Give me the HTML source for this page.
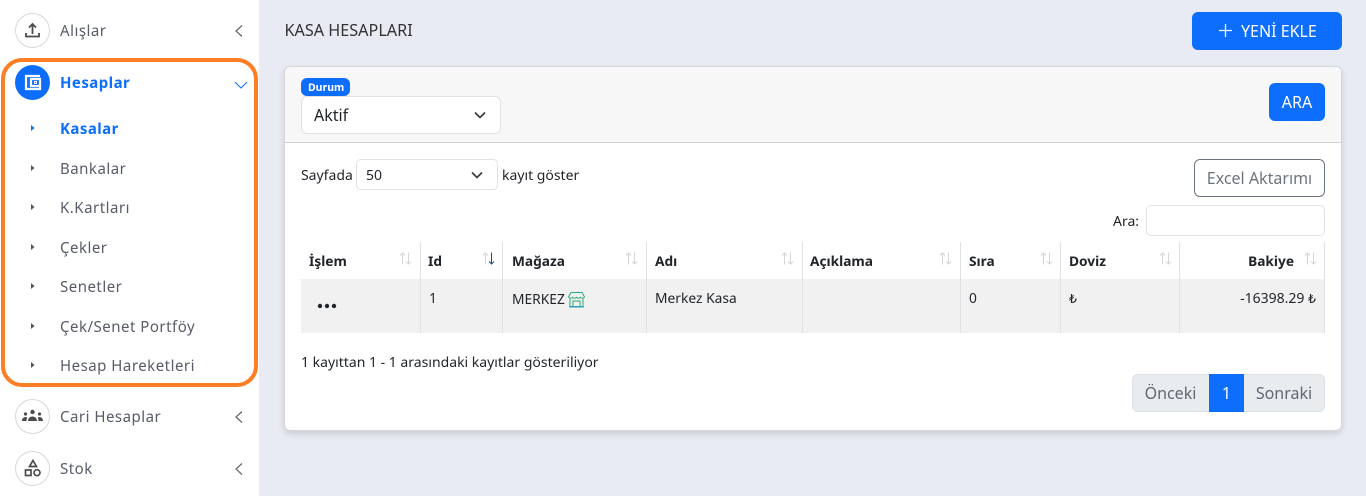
<!DOCTYPE html>
<html lang="tr"><head><meta charset="utf-8"><title>Kasa Hesapları</title>
<style>
html,body{margin:0;padding:0;width:1366px;height:496px;overflow:hidden;background:#e8ebf3}
body{position:relative;font-family:"Noto Sans","Noto Sans CJK JP","Liberation Sans",sans-serif;color:#212529;font-size:14px}
.a{position:absolute;white-space:nowrap;line-height:20px}
.box{position:absolute;box-sizing:border-box}
.m{color:#585c68;font-size:15px;letter-spacing:.5px;left:60px}
.mb{color:#0d6efd;font-weight:700;font-size:15px;letter-spacing:.45px;left:60px}
.th{font-weight:700;font-size:13.7px;color:#212529;top:252px}
.td{font-size:13.8px;color:#212529;top:289px}
.vl{position:absolute;top:242px;height:91px;width:1px;background:#dee2e6}
svg{position:absolute;display:block}
</style></head><body>
<div class="box" style="left:0;top:0;width:259px;height:496px;background:#fff"></div>
<div class="box" style="left:1px;top:58px;width:257px;height:329px;border:4px solid #fd7e24;border-radius:21px"></div>

<div class="box" style="left:15px;top:13px;width:35px;height:35px;border:1px solid #d8d8d8;border-radius:50%"></div>
<svg style="left:24px;top:22px" width="17" height="17" viewBox="0 0 17 17" fill="none" stroke="#4b4b4b" stroke-width="1.8"><path d="M8.5 12V2.500M5 5.500l3.500-3.500 3.500 3.500M2 11v3.500h13V11"/></svg>
<div class="a m" style="top:21px">Alışlar</div>
<svg style="left:234px;top:24px" width="10" height="14" viewBox="0 0 10 14" fill="none" stroke="#666" stroke-width="1.200"><path d="M8 1.500L2 7l6 5.500"/></svg>

<div class="box" style="left:15px;top:65px;width:35px;height:35px;background:#0d6efd;border-radius:50%"></div>
<svg style="left:24px;top:74px" width="18" height="17" viewBox="0 0 18 17" fill="none" stroke="#fff" stroke-width="2.200"><path d="M16 2H2v13h14V5H7v7h9"/><rect x="10.500" y="7.500" width="2" height="2" stroke-width="1"/></svg>
<div class="a mb" style="top:73px">Hesaplar</div>
<svg style="left:234px;top:80px" width="14" height="10" viewBox="0 0 14 10" fill="none" stroke="#0d6efd" stroke-width="1"><path d="M1 2l6 6 6-6"/></svg>

<div class="a mb" style="top:119px">Kasalar</div>
<div class="a m" style="top:159px">Bankalar</div>
<div class="a m" style="top:198px">K.Kartları</div>
<div class="a m" style="top:238px">Çekler</div>
<div class="a m" style="top:277px">Senetler</div>
<div class="a m" style="top:317px">Çek/Senet Portföy</div>
<div class="a m" style="top:356px">Hesap Hareketleri</div>
<svg style="left:31px;top:125px" width="4" height="6"><path d="M0 0l3.500 3L0 6z" fill="#0d6efd"/></svg>
<svg style="left:31px;top:165px" width="4" height="6"><path d="M0 0l3.500 3L0 6z" fill="#555"/></svg>
<svg style="left:31px;top:204px" width="4" height="6"><path d="M0 0l3.500 3L0 6z" fill="#555"/></svg>
<svg style="left:31px;top:244px" width="4" height="6"><path d="M0 0l3.500 3L0 6z" fill="#555"/></svg>
<svg style="left:31px;top:283px" width="4" height="6"><path d="M0 0l3.500 3L0 6z" fill="#555"/></svg>
<svg style="left:31px;top:323px" width="4" height="6"><path d="M0 0l3.500 3L0 6z" fill="#555"/></svg>
<svg style="left:31px;top:362px" width="4" height="6"><path d="M0 0l3.500 3L0 6z" fill="#555"/></svg>

<div class="box" style="left:15px;top:399px;width:35px;height:35px;border:1px solid #d8d8d8;border-radius:50%"></div>
<svg style="left:22px;top:409px" width="21" height="14" viewBox="0 0 21 14" fill="#4b4b4b"><circle cx="10.500" cy="3" r="2.200"/><circle cx="3.500" cy="5" r="1.600"/><circle cx="17.500" cy="5" r="1.600"/><path d="M6 12c0-6 9-6 9 0zM0 12c0-4 4-4.500 5-3.500L4.500 12zM21 12c0-4-4-4.500-5-3.500l.5 3.500z"/></svg>
<div class="a m" style="top:407px">Cari Hesaplar</div>
<svg style="left:234px;top:410px" width="10" height="14" viewBox="0 0 10 14" fill="none" stroke="#666" stroke-width="1.200"><path d="M8 1.500L2 7l6 5.500"/></svg>

<div class="box" style="left:15px;top:451px;width:35px;height:35px;border:1px solid #d8d8d8;border-radius:50%"></div>
<svg style="left:24px;top:459px" width="18" height="18" viewBox="0 0 18 18" fill="none" stroke="#4b4b4b" stroke-width="1.700"><path d="M9 1.500L12.500 7.500h-7z"/><rect x="1.500" y="11" width="5.500" height="5.500"/><circle cx="13" cy="13.700" r="3"/></svg>
<div class="a m" style="top:459px">Stok</div>
<svg style="left:234px;top:462px" width="10" height="14" viewBox="0 0 10 14" fill="none" stroke="#666" stroke-width="1.200"><path d="M8 1.500L2 7l6 5.500"/></svg>

<div class="a" style="left:284.500px;top:20px;font-size:16.200px;color:#333">KASA HESAPLARI</div>
<div class="box" style="left:1192px;top:12px;width:150px;height:38px;background:#0d6efd;border-radius:6px"></div>
<svg style="left:1219px;top:24px" width="13" height="13" viewBox="0 0 13 13" stroke="#fff" stroke-width="1.300"><path d="M6.500 0v13M0 6.500h13"/></svg>
<div class="a" style="left:1241px;top:21px;color:#fff;font-size:16px">YENİ EKLE</div>

<div class="box" style="left:284px;top:66px;width:1058px;height:365px;background:#fff;border:1px solid #d6d6d8;border-radius:6px;box-shadow:0 3px 7px rgba(0,0,0,.13)"></div>
<div class="box" style="left:285px;top:67px;width:1056px;height:76px;background:#f7f7f7;border-bottom:1px solid #d2d2d2;border-radius:5px 5px 0 0"></div>

<div class="box" style="left:301px;top:96px;width:200px;height:38px;background:#fff;border:1px solid #dee2e6;border-radius:6px"></div>
<div class="box" style="left:301px;top:78px;width:49px;height:18px;background:#0d6efd;border-radius:6px"></div>
<div class="a" style="left:308px;top:79px;height:18px;line-height:18px;color:#fff;font-size:10.500px;font-weight:700">Durum</div>
<div class="a" style="left:314px;top:105px;font-size:16px;color:#212529">Aktif</div>
<svg style="left:474px;top:111px" width="12" height="8" viewBox="0 0 12 8" fill="none" stroke="#343a40" stroke-width="1.600"><path d="M1 1.500l5 5 5-5"/></svg>
<div class="box" style="left:1269px;top:83px;width:56px;height:38px;background:#0d6efd;border-radius:6px"></div>
<div class="a" style="left:1269px;width:56px;text-align:center;top:92px;color:#fff;font-size:16px">ARA</div>

<div class="a" style="left:301px;top:166px;font-size:14px">Sayfada</div>
<div class="box" style="left:356px;top:159px;width:142px;height:31px;background:#fff;border:1px solid #dee2e6;border-radius:5px"></div>
<div class="a" style="left:366px;top:166px;font-size:14px">50</div>
<svg style="left:471px;top:171px" width="12" height="8" viewBox="0 0 12 8" fill="none" stroke="#343a40" stroke-width="1.600"><path d="M1 1.500l5 5 5-5"/></svg>
<div class="a" style="left:502px;top:166px;font-size:14px">kayıt göster</div>

<div class="box" style="left:1194px;top:159px;width:131px;height:38px;border:1px solid #6c757d;border-radius:6px"></div>
<div class="a" style="left:1194px;width:131px;text-align:center;top:168px;font-size:16px;color:#6c757d">Excel Aktarımı</div>
<div class="a" style="left:1113px;top:212px;font-size:14px">Ara:</div>
<div class="box" style="left:1146px;top:205px;width:179px;height:31px;border:1px solid #dee2e6;border-radius:5px"></div>

<div class="box" style="left:301px;top:279px;width:1024px;height:54px;background:#f1f1f2"></div>
<div class="vl" style="left:420px"></div><div class="vl" style="left:502px"></div><div class="vl" style="left:646px"></div><div class="vl" style="left:802px"></div><div class="vl" style="left:960px"></div><div class="vl" style="left:1060px"></div><div class="vl" style="left:1179px"></div><div class="vl" style="left:1324px"></div>

<div class="a th" style="left:309px">İşlem</div>
<div class="a th" style="left:428px">Id</div>
<div class="a th" style="left:512px">Mağaza</div>
<div class="a th" style="left:655px">Adı</div>
<div class="a th" style="left:810px">Açıklama</div>
<div class="a th" style="left:969px">Sıra</div>
<div class="a th" style="left:1069px">Doviz</div>
<div class="a th" style="left:1194px;width:100px;text-align:right">Bakiye</div>

<svg style="left:399px;top:252px" width="13" height="13" viewBox="0 0 13 13" fill="none" stroke="#d5d5d5"><path d="M3.500 12.500V1M1 3.500L3.500 1 6 3.500M9.500 .5V12M7 9.500L9.500 12 12 9.500"/></svg>
<svg style="left:482px;top:252px" width="13" height="13" viewBox="0 0 13 13" fill="none" stroke="#d5d5d5"><path d="M3.500 12.500V1M1 3.500L3.500 1 6 3.500"/><path stroke="#1a4f8a" d="M9.500 .5V12M7 9.500L9.500 12 12 9.500"/></svg>
<svg style="left:625px;top:252px" width="13" height="13" viewBox="0 0 13 13" fill="none" stroke="#d5d5d5"><path d="M3.500 12.500V1M1 3.500L3.500 1 6 3.500M9.500 .5V12M7 9.500L9.500 12 12 9.500"/></svg>
<svg style="left:781px;top:252px" width="13" height="13" viewBox="0 0 13 13" fill="none" stroke="#d5d5d5"><path d="M3.500 12.500V1M1 3.500L3.500 1 6 3.500M9.500 .5V12M7 9.500L9.500 12 12 9.500"/></svg>
<svg style="left:939px;top:252px" width="13" height="13" viewBox="0 0 13 13" fill="none" stroke="#d5d5d5"><path d="M3.500 12.500V1M1 3.500L3.500 1 6 3.500M9.500 .5V12M7 9.500L9.500 12 12 9.500"/></svg>
<svg style="left:1040px;top:252px" width="13" height="13" viewBox="0 0 13 13" fill="none" stroke="#d5d5d5"><path d="M3.500 12.500V1M1 3.500L3.500 1 6 3.500M9.500 .5V12M7 9.500L9.500 12 12 9.500"/></svg>
<svg style="left:1159px;top:252px" width="13" height="13" viewBox="0 0 13 13" fill="none" stroke="#d5d5d5"><path d="M3.500 12.500V1M1 3.500L3.500 1 6 3.500M9.500 .5V12M7 9.500L9.500 12 12 9.500"/></svg>
<svg style="left:1304px;top:252px" width="13" height="13" viewBox="0 0 13 13" fill="none" stroke="#d5d5d5"><path d="M3.500 12.500V1M1 3.500L3.500 1 6 3.500M9.500 .5V12M7 9.500L9.500 12 12 9.500"/></svg>

<svg style="left:317px;top:303px" width="21" height="6" fill="#212529"><circle cx="3" cy="3" r="2.200"/><circle cx="10" cy="3" r="2.200"/><circle cx="17" cy="3" r="2.200"/></svg>
<div class="a td" style="left:429px">1</div>
<div class="a td" style="left:512px;top:290px">MERKEZ</div>
<svg style="left:568px;top:291px" width="17" height="17" viewBox="0 0 17 17" fill="none" stroke="#2aa876" stroke-width="1"><path d="M3 1.500h11l2.500 4.500c-1 1.600-2.800 1.600-4 .3-1 1.300-3 1.300-4 0-1 1.300-3 1.300-4 0-1.200 1.300-3 1.300-4-.3z"/><path d="M2 8v7.500h13V8M5 15V10h7v5"/><path stroke="#2aa0d0" d="M1 16h15"/></svg>
<div class="a td" style="left:655px">Merkez Kasa</div>
<div class="a td" style="left:969px">0</div>
<div class="a td" style="left:1069px;font-family:'DejaVu Sans',sans-serif;font-size:12.500px">₺</div>
<div class="a td" style="left:1200px;width:116px;text-align:right;font-size:14px">-16398.29 <span style="font-family:'DejaVu Sans',sans-serif;font-size:12.500px">₺</span></div>

<div class="a" style="left:301px;top:353px;font-size:14px">1 kayıttan 1 - 1 arasındaki kayıtlar gösteriliyor</div>

<div class="box" style="left:1132px;top:374px;width:193px;height:38px;background:#e9ecef;border:1px solid #dee2e6;border-radius:6px"></div>
<div class="box" style="left:1209px;top:374px;width:35px;height:38px;background:#0d6efd"></div>
<div class="a" style="left:1132px;width:77px;text-align:center;top:383px;font-size:16px;color:#5f6771">Önceki</div>
<div class="a" style="left:1209px;width:35px;text-align:center;top:383px;font-size:16px;color:#fff">1</div>
<div class="a" style="left:1244px;width:80px;text-align:center;top:383px;font-size:16px;color:#5f6771">Sonraki</div>
</body></html>
